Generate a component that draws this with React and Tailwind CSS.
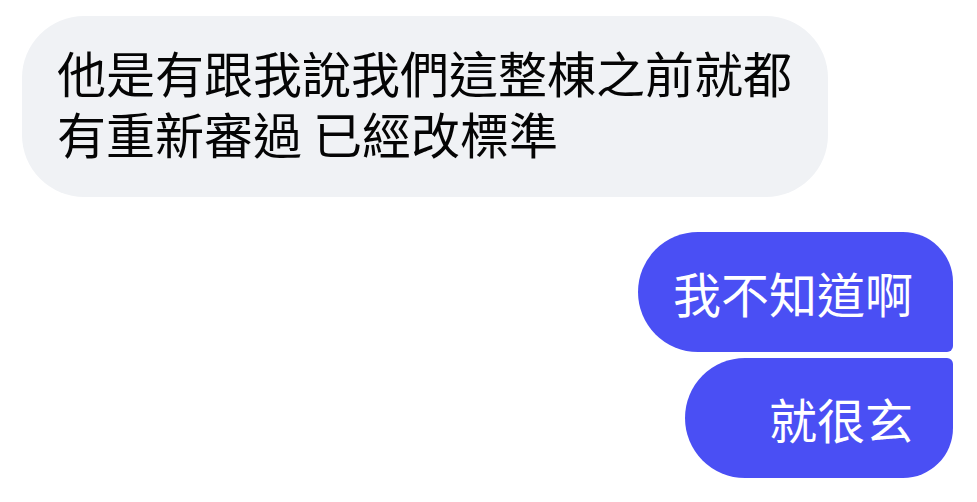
import React from 'react'

const font = { fontFamily: '"Noto Sans CJK TC", "Noto Sans", sans-serif' }

export default function App() {
  return (
    <div className="w-[977px] h-[502px] bg-white overflow-hidden" style={font}>
      <div className="pt-[16px] pl-[22px]">
        <div className="w-[806px] h-[181px] rounded-[62px] bg-[#f0f2f5] pl-[35px] pt-[25px] text-[49px] leading-[61px] text-[#050505]">
          他是有跟我說我們這整棟之前就都
          <br />
          有重新審過 已經改標準
        </div>
      </div>

      <div className="flex flex-col items-end gap-[6px] pr-[24px] pt-[35px]">
        <div className="h-[120px] flex items-center pl-[35px] pr-[40px] rounded-l-[60px] rounded-tr-[50px] rounded-br-[6px] bg-[#4a4ff4] text-white text-[48px]">
          我不知道啊
        </div>
        <div className="h-[120px] flex items-center pl-[84px] pr-[40px] rounded-l-[60px] rounded-tr-[6px] rounded-br-[50px] bg-[#4a4ff4] text-white text-[48px]">
          就很玄
        </div>
      </div>
    </div>
  )
}
